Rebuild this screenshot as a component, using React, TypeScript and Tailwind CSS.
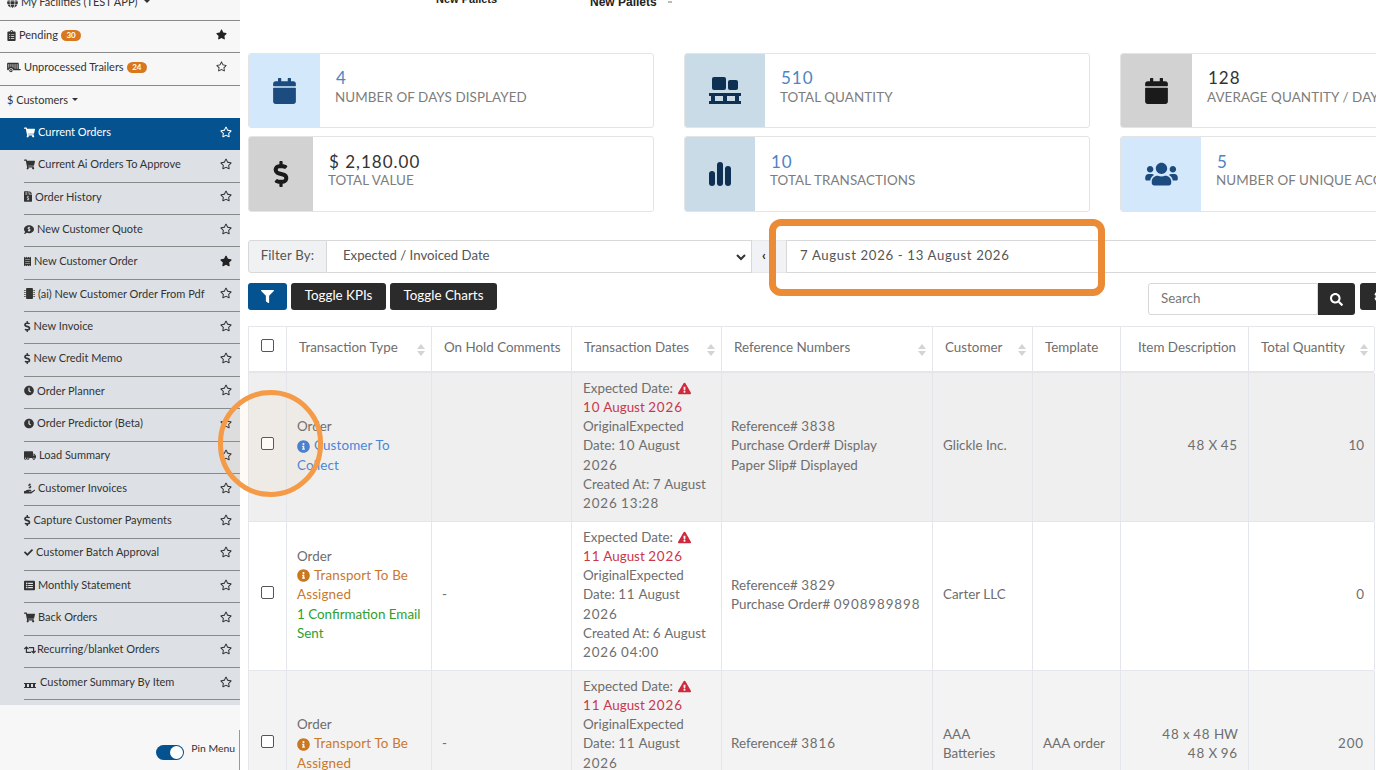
import React from 'react';
import {
  FaCalendar, FaClock, FaCommentDollar, FaDollarSign, FaExclamationTriangle, FaFileInvoiceDollar, FaGlobe,
  FaInfoCircle, FaListAlt, FaMicrochip, FaRetweet, FaSearch, FaShoppingCart, FaStar, FaTruckMoving, FaUsers,
  FaHandHoldingUsd, FaRegStar, FaCheck, FaFilter, FaClipboardList, FaReceipt, FaCog,
} from 'react-icons/fa';
import { FaTrailer } from 'react-icons/fa6';

const font = "font-['Lato','Liberation_Sans',sans-serif]";

const Caret = () => <span className="inline-block ml-[4px] mb-[2px] w-0 h-0 border-x-[3px] border-x-transparent border-t-[3px] border-t-[#333]" />;

const TopItem = ({ icon, label, badge, star, caret }: { icon: React.ReactNode; label: string; badge?: string; star?: 'on' | 'off'; caret?: boolean }) => (
  <div className="h-[32.4px] flex items-center pl-[7px] pr-[13px] pb-[3px] border-b border-[#8a8a8a] text-[11px] text-[#333]">
    <span className="flex items-center gap-[3px] flex-1">
      {icon}
      {label}
      {caret && <Caret />}
      {badge && <span className="rounded-full bg-[#d9771f] text-white text-[8px] leading-[11px] px-[5.5px] font-bold">{badge}</span>}
    </span>
    {star === 'on' && <FaStar className="w-[11px] h-[11px] text-[#222] -mt-[1px]" />}
    {star === 'off' && <FaRegStar className="w-[11px] h-[11px] text-[#333] -mt-[1px]" />}
  </div>
);

const SubItem = ({ icon, label, active, on }: { icon: React.ReactNode; label: string; active?: boolean; on?: boolean }) => (
  <div className={`h-[32.35px] flex items-center pr-[8px] pb-[3px] text-[11px] ${active ? 'bg-[#04528f] text-white pl-[24px]' : 'ml-[24px] text-[#333] border-b border-[#8a8a8a]'}`}>
    <span className="flex items-center gap-[3px] flex-1 whitespace-nowrap">
      {icon}
      {label}
    </span>
    {on ? <FaStar className="w-[12px] h-[12px] text-[#222] -mt-[1px]" /> : <FaRegStar className="w-[12px] h-[12px] -mt-[1px]" />}
  </div>
);

const ic = 'w-[11px] h-[11px] shrink-0';
const narrow = 'w-[8px] h-[11px] shrink-0';
const dollar = 'w-[6.5px] h-[11px] shrink-0';

const PalletIcon = () => (
  <svg className="w-[32px] h-[28px]" viewBox="0 0 32 28" fill="currentColor">
    <rect x="3" y="0" width="14" height="13" rx="2" />
    <rect x="19" y="3" width="10" height="10" rx="2" />
    <rect x="0" y="16" width="32" height="3" />
    <rect x="2" y="19" width="4" height="5" />
    <rect x="14" y="19" width="4" height="5" />
    <rect x="26" y="19" width="4" height="5" />
    <rect x="0" y="24" width="32" height="3" />
  </svg>
);

const SmallPallet = () => (
  <svg className="w-[12px] h-[5px] shrink-0 mt-[6px] mr-[1px]" viewBox="0 0 12 5" fill="currentColor">
    <rect x="0" y="0" width="12" height="1" />
    <rect x="1" y="1" width="2" height="3" />
    <rect x="5" y="1" width="2" height="3" />
    <rect x="9" y="1" width="2" height="3" />
    <rect x="0" y="4" width="12" height="1" />
  </svg>
);

const BarsIcon = () => (
  <svg className="w-[22px] h-[24px]" viewBox="0 0 22 24" fill="currentColor">
    <rect x="0" y="9" width="6" height="15" rx="3" />
    <rect x="8" y="0" width="6" height="24" rx="3" />
    <rect x="16" y="4" width="6" height="20" rx="3" />
  </svg>
);

// digits in the reference run wider than Lato's, so they get some extra tracking
const Num = ({ text }: { text: string }) => (
  <>
    {text.split(/(\d+)/).map((part, i) =>
      /\d/.test(part) ? <span key={i} className="tracking-[0.9px]">{part}</span> : part
    )}
  </>
);

const Kpi = ({ tint, iconColor, icon, value, valueColor, label }: { tint: string; iconColor: string; icon: React.ReactNode; value: string; valueColor: string; label: string }) => (
  <div className="w-[406px] h-full flex border border-[#e4e4e4] rounded-[3px] bg-white overflow-hidden shrink-0">
    <div className={`${tint} ${iconColor} flex items-center justify-center shrink-0 h-full`}>
      {icon}
    </div>
    <div className="pl-[16px] pb-[6px] flex flex-col justify-center whitespace-nowrap">
      <div className={`text-[17px] leading-[19.5px] tracking-[1px] ${valueColor}`}>{value}</div>
      <div className="text-[13.4px] leading-[19.5px] tracking-[0.1px] text-[#7d7d7d] -ml-[1px]">{label}</div>
    </div>
  </div>
);

const Sort = () => (
  <span className="flex flex-col gap-[2px] shrink-0 mt-[2px]">
    <span className="w-0 h-0 border-x-[4px] border-x-transparent border-b-[5px] border-b-[#d4d4d4]" />
    <span className="w-0 h-0 border-x-[4px] border-x-transparent border-t-[5px] border-t-[#d4d4d4]" />
  </span>
);

const Th = ({ w, label, sort, right }: { w: string; label: string; sort?: boolean; right?: boolean }) => (
  <div className={`${w} shrink-0 border-r border-[#e3e6ea] flex items-center ${right ? 'justify-end pr-[12px]' : 'justify-between pl-[12px] pr-[6px]'} text-[13.4px] text-[#6e6e6e] whitespace-nowrap`}>
    <span className="pb-[4px]">{label}</span>
    {sort && <Sort />}
  </div>
);

const cols = {
  check: 'w-[38px]',
  type: 'w-[145px]',
  hold: 'w-[140px]',
  dates: 'w-[150px]',
  refs: 'w-[211px]',
  cust: 'w-[100px]',
  tmpl: 'w-[88px]',
  item: 'w-[128px]',
  qty: 'w-[126px]',
};

const Checkbox = () => <span className="block w-[13px] h-[13px] rounded-[2px] border border-[#555] bg-white" />;

const Td = ({ w, children, right }: { w: string; children?: React.ReactNode; right?: boolean }) => (
  <div className={`${w} shrink-0 border-r border-[#e3e6ea] flex flex-col justify-center px-[10px] pb-[2px] text-[13.4px] leading-[19.2px] text-[#6e6e6e] ${right ? 'items-end text-right whitespace-nowrap' : ''}`}>
    {children}
  </div>
);

const Dates = ({ expected, original, created, time }: { expected: string; original: string; created: string; time: string }) => (
  <div className="pl-[1px] whitespace-nowrap">
    <div className="flex items-center gap-[5px]">Expected Date: <FaExclamationTriangle className="w-[13px] h-[13px] text-[#d0293d]" /></div>
    <div className="text-[#c8374d]"><Num text={expected} /></div>
    <div>OriginalExpected</div>
    <div><Num text={`Date: ${original}`} /></div>
    <div><Num text="2026" /></div>
    <div><Num text={`Created At: ${created}`} /></div>
    <div><Num text={`2026 ${time}`} /></div>
  </div>
);

const Transport = () => (
  <div className="text-[#c9782a] tracking-[0.15px]">
    <FaInfoCircle className="inline w-[13px] h-[13px] mr-[4px] -mt-[2px] text-[#c9781f]" />
    Transport To Be Assigned
  </div>
);

const Row = ({ tint, children }: { tint: string; children: React.ReactNode }) => (
  <div className={`${tint} h-[149px] flex border-b border-[#e3e6ea] shrink-0`}>{children}</div>
);

const CheckCell = () => (
  <div className={`${cols.check} shrink-0 border-r border-[#e3e6ea] flex items-center justify-center pb-[7px]`}><Checkbox /></div>
);

export default function App() {
  return (
    <div className={`w-[1376px] h-[770px] overflow-hidden flex bg-white relative ${font}`}>
      <aside className="w-[240px] shrink-0 h-full flex flex-col bg-[#f7f7f7]">
        <div className="-mt-[11.5px]">
          <TopItem icon={<FaGlobe className={ic} />} label="My Facilities (TEST APP)" caret />
          <TopItem icon={<FaClipboardList className="w-[9px] h-[11px] shrink-0" />} label="Pending" badge="30" star="on" />
          <TopItem icon={<FaTrailer className="w-[14px] h-[11px] shrink-0" />} label="Unprocessed Trailers" badge="24" star="off" />
          <div className="h-[32.4px] flex items-center pl-[7px] pb-[3px] text-[11px] text-[#333]">$ Customers<Caret /></div>
        </div>
        <div className="bg-[#dde1e6] h-[587px] shrink-0">
          <SubItem active icon={<FaShoppingCart className={ic} />} label="Current Orders" />
          <SubItem icon={<FaShoppingCart className={ic} />} label="Current Ai Orders To Approve" />
          <SubItem icon={<FaFileInvoiceDollar className={narrow} />} label="Order History" />
          <SubItem icon={<FaCommentDollar className="w-[10px] h-[11px] shrink-0" />} label="New Customer Quote" />
          <SubItem on icon={<FaReceipt className="w-[7px] h-[11px] shrink-0" />} label="New Customer Order" />
          <SubItem icon={<FaMicrochip className={ic} />} label="(ai) New Customer Order From Pdf" />
          <SubItem icon={<FaDollarSign className={dollar} />} label="New Invoice" />
          <SubItem icon={<FaDollarSign className={dollar} />} label="New Credit Memo" />
          <SubItem icon={<FaClock className="w-[10px] h-[11px] shrink-0" />} label="Order Planner" />
          <SubItem icon={<FaClock className="w-[10px] h-[11px] shrink-0" />} label="Order Predictor (Beta)" />
          <SubItem icon={<FaTruckMoving className="w-[12px] h-[11px] shrink-0" />} label="Load Summary" />
          <SubItem icon={<FaHandHoldingUsd className={ic} />} label="Customer Invoices" />
          <SubItem icon={<FaDollarSign className={dollar} />} label="Capture Customer Payments" />
          <SubItem icon={<FaCheck className="w-[9px] h-[9px] shrink-0" />} label="Customer Batch Approval" />
          <SubItem icon={<FaListAlt className={ic} />} label="Monthly Statement" />
          <SubItem icon={<FaShoppingCart className={ic} />} label="Back Orders" />
          <SubItem icon={<FaRetweet className="w-[12px] h-[12px] shrink-0 -mr-[2px]" />} label="Recurring/blanket Orders" />
          <SubItem icon={<SmallPallet />} label="Customer Summary By Item" />
        </div>
        <div className="flex-1 flex items-end justify-end gap-[7px] text-[10.4px] text-[#333]">
          <span className="w-[28px] h-[15px] rounded-full bg-[#04528f] flex items-center justify-end pr-[1px] mb-[10px]">
            <span className="w-[13px] h-[13px] rounded-full bg-white" />
          </span>
          <span className="mb-[13px]">Pin Menu</span>
          <span className="w-px h-[40px] bg-[#999] -ml-[3px]" />
        </div>
      </aside>

      <main className="flex-1 min-w-0 pl-[8px] flex flex-col">
        <div className="h-[53px] shrink-0 relative font-bold text-[#222] font-['Liberation_Sans',sans-serif]">
          <span className="absolute left-[188px] -top-[9px] text-[11px]">New Pallets</span>
          <span className="absolute left-[342px] -top-[7px] text-[12px]">New Pallets</span>
          <span className="absolute left-[420px] top-[1px] w-[4px] h-[2px] bg-[#bbb]" />
        </div>

        <div className="h-[75px] flex gap-[30px] shrink-0">
          <Kpi tint="bg-[#d3e8fb] w-[71px]" iconColor="text-[#1b4b7f]" icon={<FaCalendar className="w-[23px] h-[26px]" />} value="4" valueColor="text-[#4d84c4]" label="NUMBER OF DAYS DISPLAYED" />
          <Kpi tint="bg-[#c9dbe7] w-[80px]" iconColor="text-[#0e3053]" icon={<PalletIcon />} value="510" valueColor="text-[#4d84c4]" label="TOTAL QUANTITY" />
          <Kpi tint="bg-[#d2d2d2] w-[71px]" iconColor="text-[#1a1a1a]" icon={<FaCalendar className="w-[23px] h-[26px]" />} value="128" valueColor="text-[#333]" label="AVERAGE QUANTITY / DAY" />
        </div>
        <div className="h-[76px] flex gap-[30px] shrink-0 mt-[8px]">
          <Kpi tint="bg-[#d2d2d2] w-[64px]" iconColor="text-[#1a1a1a]" icon={<FaDollarSign className="w-[20px] h-[26px]" />} value="$ 2,180.00" valueColor="text-[#333]" label="TOTAL VALUE" />
          <Kpi tint="bg-[#c9dbe7] w-[70px]" iconColor="text-[#0e3053]" icon={<BarsIcon />} value="10" valueColor="text-[#4d84c4]" label="TOTAL TRANSACTIONS" />
          <Kpi tint="bg-[#d3e8fb] w-[80px]" iconColor="text-[#1b4b7f]" icon={<FaUsers className="w-[33px] h-[26px]" />} value="5" valueColor="text-[#4d84c4]" label="NUMBER OF UNIQUE ACCOUNTS" />
        </div>

        <div className="h-[33px] mt-[28px] flex shrink-0 text-[13.2px] text-[#555]">
          <div className="w-[79px] bg-[#eff1f3] border border-[#d8d8d8] rounded-l-[3px] flex items-center justify-center pb-[2px] tracking-[0.2px]">Filter By:</div>
          <div className="w-[425px] border-y border-r border-[#d8d8d8] flex items-center justify-between pl-[16px] pr-[5px]">
            <span className="pb-[2px]">Expected / Invoiced Date</span>
            <svg className="w-[10px] h-[10px] text-[#333]" viewBox="0 0 10 10" fill="none" stroke="currentColor" strokeWidth="2"><path d="M1 3l4 4 4-4" /></svg>
          </div>
          <div className="w-[34px] bg-[#f0f2f5] flex items-center pl-[10px] border-y border-[#e8e8e8] text-[#222] font-bold pb-[2px]">‹</div>
          <div className="flex-1 border-y border-l border-[#d8d8d8] flex items-center pl-[13px] pb-[2px] tracking-[0.65px]">7 August 2026 - 13 August 2026</div>
        </div>

        <div className="h-[43px] mt-[10px] flex items-start justify-between shrink-0">
          <div className="flex gap-[4px]">
            <button className="w-[39px] h-[27px] rounded-[3px] bg-[#04528f] text-white flex items-center justify-center"><FaFilter className="w-[13px] h-[13px]" /></button>
            <button className="w-[95px] h-[27px] rounded-[3px] bg-[#2b2b2b] text-white text-[13.4px] pb-[2px]">Toggle KPIs</button>
            <button className="w-[107px] h-[27px] rounded-[3px] bg-[#2b2b2b] text-white text-[13.4px] pb-[2px]">Toggle Charts</button>
          </div>
          <div className="flex -mr-[14px]">
            <div className="w-[170px] h-[32px] border border-[#d8d8d8] rounded-l-[3px] flex items-center pl-[12px] pb-[2px] text-[13.4px] text-[#777]">Search</div>
            <div className="w-[37px] h-[32px] bg-[#2b2b2b] rounded-r-[3px] text-white flex items-center justify-center"><FaSearch className="w-[13px] h-[13px]" /></div>
            <div className="w-[30px] h-[27px] ml-[5px] pl-[14px] bg-[#2b2b2b] rounded-l-[3px] text-white flex items-center"><FaCog className="w-[13px] h-[13px]" /></div>
          </div>
        </div>

        <div className="border-l border-t border-[#e3e6ea] flex flex-col w-[1126px] shrink-0">
          <div className="h-[46px] flex border-b-2 border-[#e3e6ea] shrink-0">
            <div className={`${cols.check} shrink-0 border-r border-[#e3e6ea] flex items-center justify-center pb-[8px]`}><Checkbox /></div>
            <Th w={cols.type} label="Transaction Type" sort />
            <Th w={cols.hold} label="On Hold Comments" />
            <Th w={cols.dates} label="Transaction Dates" sort />
            <Th w={cols.refs} label="Reference Numbers" sort />
            <Th w={cols.cust} label="Customer" sort />
            <Th w={cols.tmpl} label="Template" />
            <Th w={cols.item} label="Item Description" right />
            <Th w={cols.qty} label="Total Quantity" sort />
          </div>
          <Row tint="bg-[#efefef]">
            <CheckCell />
            <Td w={cols.type}>
              <div>Order</div>
              <div className="text-[#4a86d8] tracking-[0.15px]"><FaInfoCircle className="inline w-[13px] h-[13px] mr-[4px] -mt-[2px] text-[#3f80d6]" />Customer To Collect</div>
            </Td>
            <Td w={cols.hold} />
            <Td w={cols.dates}><Dates expected="10 August 2026" original="10 August" created="7 August" time="13:28" /></Td>
            <Td w={cols.refs}>
              <div className="-ml-px">
                <div><Num text="Reference# 3838" /></div>
                <div>Purchase Order# Display</div>
                <div>Paper Slip# Displayed</div>
              </div>
            </Td>
            <Td w={cols.cust}>Glickle Inc.</Td>
            <Td w={cols.tmpl} />
            <Td w={cols.item} right><div><Num text="48 X 45" /></div></Td>
            <Td w={cols.qty} right>10</Td>
          </Row>
          <Row tint="bg-white">
            <CheckCell />
            <Td w={cols.type}>
              <div>Order</div>
              <Transport />
              <div className="text-[#2ea02e]">1 Confirmation Email Sent</div>
            </Td>
            <Td w={cols.hold}>-</Td>
            <Td w={cols.dates}><Dates expected="11 August 2026" original="11 August" created="6 August" time="04:00" /></Td>
            <Td w={cols.refs}>
              <div className="-ml-px">
                <div><Num text="Reference# 3829" /></div>
                <div className="whitespace-nowrap"><Num text="Purchase Order# 0908989898" /></div>
              </div>
            </Td>
            <Td w={cols.cust}>Carter LLC</Td>
            <Td w={cols.tmpl} />
            <Td w={cols.item} />
            <Td w={cols.qty} right>0</Td>
          </Row>
          <Row tint="bg-[#f3f3f3]">
            <CheckCell />
            <Td w={cols.type}>
              <div>Order</div>
              <Transport />
            </Td>
            <Td w={cols.hold}>-</Td>
            <Td w={cols.dates}><Dates expected="11 August 2026" original="11 August" created="6 August" time="04:00" /></Td>
            <Td w={cols.refs}><div className="-ml-px"><Num text="Reference# 3816" /></div></Td>
            <Td w={cols.cust}>AAA Batteries</Td>
            <Td w={cols.tmpl}>AAA order</Td>
            <Td w={cols.item} right><div><Num text="48 x 48 HW" /></div><div><Num text="48 X 96" /></div></Td>
            <Td w={cols.qty} right><Num text="200" /></Td>
          </Row>
        </div>
      </main>

      {/* annotation overlays */}
      <div className="absolute left-[769px] top-[219px] w-[336px] h-[77px] rounded-[12px] border-[7px] border-[#ec8b36]" />
      <div className="absolute left-[218px] top-[390px] w-[105px] h-[107px] rounded-full border-[5px] border-[#f59a46] bg-[#f59a46]/5" />
    </div>
  );
}
